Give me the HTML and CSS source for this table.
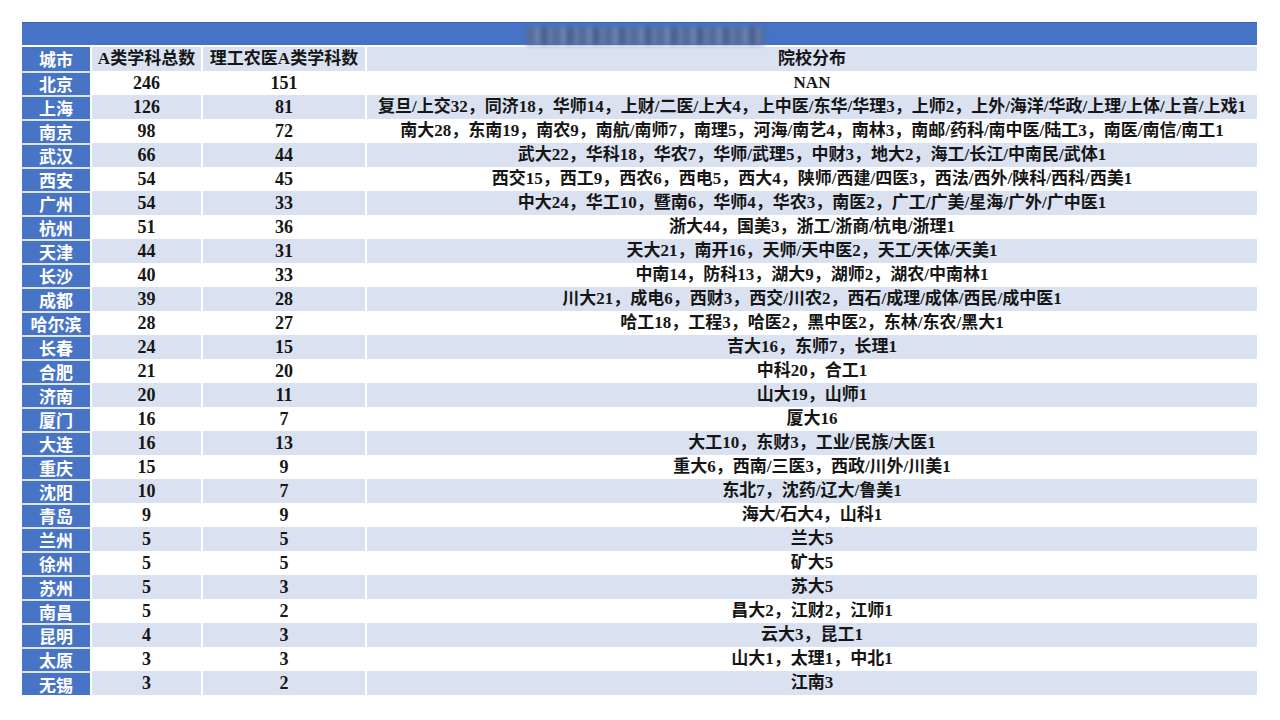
FILE: index.html
```html
<!DOCTYPE html>
<html lang="zh-CN">
<head>
<meta charset="utf-8">
<title>A类学科城市分布</title>
<link rel="stylesheet" href="styles.css">
</head>
<body>
<div class="sheet">
  <div class="title-bar"><div class="title-blur"></div></div>
  <div class="row head stripe"><div class="city">城市</div><div class="c">A类学科总数</div><div class="c">理工农医A类学科数</div><div class="c">院校分布</div></div>
  <div class="row"><div class="city">北京</div><div class="c num">246</div><div class="c num">151</div><div class="c">NAN</div></div>
  <div class="row stripe"><div class="city">上海</div><div class="c num">126</div><div class="c num">81</div><div class="c">复旦/上交32，同济18，华师14，上财/二医/上大4，上中医/东华/华理3，上师2，上外/海洋/华政/上理/上体/上音/上戏1</div></div>
  <div class="row"><div class="city">南京</div><div class="c num">98</div><div class="c num">72</div><div class="c">南大28，东南19，南农9，南航/南师7，南理5，河海/南艺4，南林3，南邮/药科/南中医/陆工3，南医/南信/南工1</div></div>
  <div class="row stripe"><div class="city">武汉</div><div class="c num">66</div><div class="c num">44</div><div class="c">武大22，华科18，华农7，华师/武理5，中财3，地大2，海工/长江/中南民/武体1</div></div>
  <div class="row"><div class="city">西安</div><div class="c num">54</div><div class="c num">45</div><div class="c">西交15，西工9，西农6，西电5，西大4，陕师/西建/四医3，西法/西外/陕科/西科/西美1</div></div>
  <div class="row stripe"><div class="city">广州</div><div class="c num">54</div><div class="c num">33</div><div class="c">中大24，华工10，暨南6，华师4，华农3，南医2，广工/广美/星海/广外/广中医1</div></div>
  <div class="row"><div class="city">杭州</div><div class="c num">51</div><div class="c num">36</div><div class="c">浙大44，国美3，浙工/浙商/杭电/浙理1</div></div>
  <div class="row stripe"><div class="city">天津</div><div class="c num">44</div><div class="c num">31</div><div class="c">天大21，南开16，天师/天中医2，天工/天体/天美1</div></div>
  <div class="row"><div class="city">长沙</div><div class="c num">40</div><div class="c num">33</div><div class="c">中南14，防科13，湖大9，湖师2，湖农/中南林1</div></div>
  <div class="row stripe"><div class="city">成都</div><div class="c num">39</div><div class="c num">28</div><div class="c">川大21，成电6，西财3，西交/川农2，西石/成理/成体/西民/成中医1</div></div>
  <div class="row"><div class="city">哈尔滨</div><div class="c num">28</div><div class="c num">27</div><div class="c">哈工18，工程3，哈医2，黑中医2，东林/东农/黑大1</div></div>
  <div class="row stripe"><div class="city">长春</div><div class="c num">24</div><div class="c num">15</div><div class="c">吉大16，东师7，长理1</div></div>
  <div class="row"><div class="city">合肥</div><div class="c num">21</div><div class="c num">20</div><div class="c">中科20，合工1</div></div>
  <div class="row stripe"><div class="city">济南</div><div class="c num">20</div><div class="c num">11</div><div class="c">山大19，山师1</div></div>
  <div class="row"><div class="city">厦门</div><div class="c num">16</div><div class="c num">7</div><div class="c">厦大16</div></div>
  <div class="row stripe"><div class="city">大连</div><div class="c num">16</div><div class="c num">13</div><div class="c">大工10，东财3，工业/民族/大医1</div></div>
  <div class="row"><div class="city">重庆</div><div class="c num">15</div><div class="c num">9</div><div class="c">重大6，西南/三医3，西政/川外/川美1</div></div>
  <div class="row stripe"><div class="city">沈阳</div><div class="c num">10</div><div class="c num">7</div><div class="c">东北7，沈药/辽大/鲁美1</div></div>
  <div class="row"><div class="city">青岛</div><div class="c num">9</div><div class="c num">9</div><div class="c">海大/石大4，山科1</div></div>
  <div class="row stripe"><div class="city">兰州</div><div class="c num">5</div><div class="c num">5</div><div class="c">兰大5</div></div>
  <div class="row"><div class="city">徐州</div><div class="c num">5</div><div class="c num">5</div><div class="c">矿大5</div></div>
  <div class="row stripe"><div class="city">苏州</div><div class="c num">5</div><div class="c num">3</div><div class="c">苏大5</div></div>
  <div class="row"><div class="city">南昌</div><div class="c num">5</div><div class="c num">2</div><div class="c">昌大2，江财2，江师1</div></div>
  <div class="row stripe"><div class="city">昆明</div><div class="c num">4</div><div class="c num">3</div><div class="c">云大3，昆工1</div></div>
  <div class="row"><div class="city">太原</div><div class="c num">3</div><div class="c num">3</div><div class="c">山大1，太理1，中北1</div></div>
  <div class="row stripe last"><div class="city">无锡</div><div class="c num">3</div><div class="c num">2</div><div class="c">江南3</div></div>
</div>
</body>
</html>
```

FILE: styles.css
```css
html, body {
  margin: 0;
  padding: 0;
  background: #ffffff;
}

body {
  padding: 22px 23px 0 22px;
  font-family: "Liberation Serif", "Noto Sans CJK SC", serif;
  font-weight: 600;
  font-size: 17px;
  color: #161616;
}

.sheet {
  width: 1235px;
  display: flex;
  flex-direction: column;
}

.title-bar {
  height: 23px;
  background: #4673c6;
  border-top: 1px solid #3d5f9e;
  box-sizing: border-box;
  margin-bottom: 2px;
  display: flex;
  justify-content: center;
  align-items: flex-end;
}

.title-blur {
  width: 238px;
  height: 18px;
  margin-left: 10px;
  background: repeating-linear-gradient(90deg, #596c92 0 9px, #7889ae 9px 14px, #4c5f88 14px 22px, #6e80a8 22px 26px);
  filter: blur(2px);
  opacity: 0.85;
}

.row {
  display: grid;
  grid-template-columns: 68px 109px 162px 890px;
  column-gap: 2px;
  height: 24px;
}

.row .c {
  display: flex;
  align-items: center;
  justify-content: center;
  white-space: nowrap;
  line-height: 24px;
}

.row .c.num {
  font-weight: 700;
  font-size: 18px;
}

.row.stripe .c {
  background: #dae2f1;
}

.row.last .c {
  border-bottom: 2px solid #5a6473;
}

.city {
  background: #4874c6;
  color: #ffffff;
  font-family: "Noto Sans CJK SC", sans-serif;
  font-weight: 700;
  font-size: 17px;
  display: flex;
  align-items: center;
  justify-content: center;
  border-top: 2px solid #dfe5ef;
  line-height: 20px;
}

.row.head .city {
  border-top: none;
}
```
